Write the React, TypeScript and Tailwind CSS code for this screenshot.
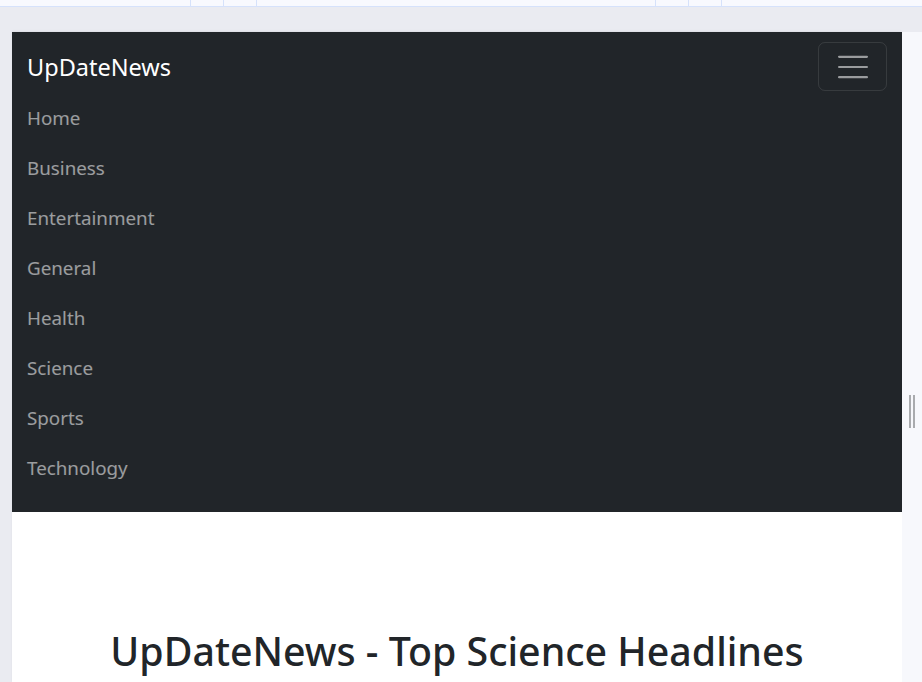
import React from 'react';

const links = ['Home', 'Business', 'Entertainment', 'General', 'Health', 'Science', 'Sports', 'Technology'];

function TopStrip() {
  const ticks = [190, 223, 256, 655, 688, 721];
  return (
    <div className="relative h-[7px] w-full bg-[#f8f9fe] border-b border-[#d6e2fb]">
      {ticks.map((x) => (
        <span key={x} className="absolute top-0 h-[6px] w-px bg-[#d6e2fb]" style={{ left: x }} />
      ))}
    </div>
  );
}

function Navbar() {
  return (
    <nav className="bg-[#212529] pt-[10px] pb-[19px]">
      <div className="px-[15px]">
        <div className="flex items-center justify-between">
          <a href="#" className="text-[23.5px] leading-[38px] text-white">
            UpDateNews
          </a>
          <button className="flex h-[49px] w-[69px] items-center justify-center rounded-[7px] border border-white/10">
            <svg width="38" height="38" viewBox="0 0 30 30">
              <path d="M4 7h22M4 15h22M4 23h22" stroke="rgba(255,255,255,0.55)" strokeWidth="1.7" strokeLinecap="round" />
            </svg>
          </button>
        </div>
        <ul className="mt-[2px] flex flex-col">
          {links.map((l) => (
            <li key={l}>
              <a href="#" className="block py-[10px] text-[18.8px] leading-[30px] text-white/55">
                {l}
              </a>
            </li>
          ))}
        </ul>
      </div>
    </nav>
  );
}

export default function App() {
  return (
    <div className="h-[682px] w-[922px] overflow-hidden bg-[#eaebf1]" style={{ fontFamily: '"Noto Sans", "Open Sans", sans-serif' }}>
      <TopStrip />
      <div className="h-[25px]" />
      <div className="flex h-[650px]">
        <div className="w-[12px] shrink-0" />
        <main className="flex-1 bg-white shadow-[0_-1px_2px_rgba(0,0,0,0.06)]">
          <Navbar />
          <h1 className="mt-[113px] text-center text-[39.3px] font-medium leading-[52px] text-[#212529]">
            UpDateNews - Top Science Headlines
          </h1>
        </main>
        <div className="flex w-[20px] shrink-0 justify-center bg-[#f7f8fc] pt-[363px]">
          <div className="flex gap-[2px]">
            <span className="h-[33px] w-[2px] bg-[#a9abae]" />
            <span className="h-[33px] w-[2px] bg-[#a9abae]" />
          </div>
        </div>
      </div>
    </div>
  );
}
